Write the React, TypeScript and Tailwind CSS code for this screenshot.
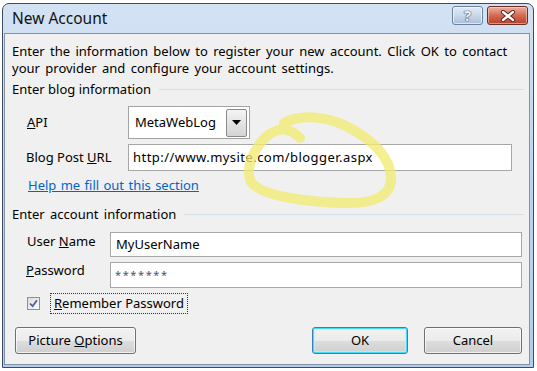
export default function App() {
  const font = "font-['Noto_Sans','Open_Sans',sans-serif]"

  return (
    <div className={`relative w-[537px] h-[371px] overflow-hidden bg-white pl-[2px] pt-[3px] text-[13px] text-black ${font}`}>
      {/* Window frame */}
      <div className="flex h-[365px] w-[532px] flex-col rounded-t-[7px] border border-[#3d4c5e] bg-gradient-to-b from-[#d3e2f3] via-[#bed4ec] to-[#b4cce8]">
        {/* Title bar */}
        <div className="flex h-[29px] items-start justify-between pl-[9px] pr-[5px]">
          <span className="mt-[4px] text-[15.5px] leading-[20px] text-[#111]">New Account</span>
          <div className="mt-[2px] flex gap-[4px]">
            <div className="flex h-[19px] w-[31px] items-center justify-center rounded-[3px] border border-[#6b819c] bg-gradient-to-b from-[#e3ecf6] via-[#c9d8ea] to-[#a9bfd9] shadow-[inset_0_0_0_1px_rgba(255,255,255,0.6)]">
              <span className="text-[15px] font-bold leading-none text-[#eef2f6] [text-shadow:0_0_1px_#3c5068,0_0_1px_#3c5068,0_0_1px_#3c5068]">?</span>
            </div>
            <div className="flex h-[19px] w-[41px] items-center justify-center rounded-[3px] border border-[#6e2e22] bg-gradient-to-b from-[#eab2a3] via-[#d36a52] to-[#b8402a] shadow-[inset_0_0_0_1px_rgba(255,230,220,0.5)]">
              <svg width="16" height="12" viewBox="0 0 16 12">
                <path d="M3 2 L13 10 M13 2 L3 10" stroke="#5a2016" strokeWidth="4.2" strokeLinecap="round" />
                <path d="M3 2 L13 10 M13 2 L3 10" stroke="#ffffff" strokeWidth="2.4" strokeLinecap="round" />
              </svg>
            </div>
          </div>
        </div>

        {/* Client area */}
        <div className="ml-[1px] mr-[3px] mb-[2px] flex-1 border border-[#8193ab] bg-[#f0f0f0] pl-[7px] pr-[5px]">
          <p className="mt-[9px] leading-[17px] [word-spacing:2px]">
            Enter the information below to register your new account. Click OK to contact
            <br />
            your provider and configure your account settings.
          </p>

          {/* Blog section */}
          <div className="mt-[4px] flex h-[17px] items-center gap-[8px]">
            <span className="leading-[17px]">Enter blog information</span>
            <div className="h-px flex-1 bg-[#d5dfe5]" />
          </div>

          <div className="mt-[8px] flex items-center pl-[15px]">
            <span className="w-[101px]"><u>A</u>PI</span>
            <div className="flex h-[33px] w-[122px] items-center justify-between border border-[#a3a3a3] bg-white pl-[6px] pr-[2px]">
              <span>MetaWebLog</span>
              <div className="flex h-[28px] w-[21px] items-center justify-center rounded-[2px] border border-[#8a8a8a] bg-gradient-to-b from-[#f4f4f4] to-[#d4d4d4]">
                <svg width="9" height="5" viewBox="0 0 9 5">
                  <path d="M0 0 H9 L4.5 5 Z" fill="#000" />
                </svg>
              </div>
            </div>
          </div>

          <div className="mt-[5px] flex items-center pl-[14px]">
            <span className="w-[102px]">Blog Post <u>U</u>RL</span>
            <div className="flex h-[27px] w-[384px] items-center border border-[#a7a7a7] bg-white pl-[4px] tracking-[0.45px]">
              http://www.mysite.com/blogger.aspx
            </div>
          </div>

          <div className="mt-[6px] pl-[16px] leading-[17px]">
            <a className="text-[#0066cc] underline [word-spacing:1px]">Help me fill out this section</a>
          </div>

          {/* Account section */}
          <div className="mt-[12px] flex h-[17px] items-center gap-[8px]">
            <span className="leading-[17px] [word-spacing:2px]">Enter account information</span>
            <div className="h-px flex-1 bg-[#d5dfe5]" />
          </div>

          <div className="mt-[9px] flex items-start pl-[15px]">
            <span className="w-[83px] pt-[1px] leading-[17px]">User <u>N</u>ame</span>
            <div className="flex h-[25px] w-[412px] items-center border border-[#a7a7a7] bg-white pl-[5px]">
              MyUserName
            </div>
          </div>

          <div className="mt-[5px] flex items-start pl-[14px]">
            <span className="w-[84px] leading-[17px]"><u>P</u>assword</span>
            <div className="flex h-[26px] w-[412px] items-center border border-[#a7a7a7] bg-white pl-[4px] text-[11px] tracking-[1.6px] text-[#4a5568]">
              *******
            </div>
          </div>

          <div className="mt-[5px] flex items-center pl-[15px]">
            <div className="flex h-[13px] w-[13px] items-center justify-center border border-[#8e8f8f] bg-gradient-to-br from-[#dcdcdc] to-[#fbfbfb]">
              <svg width="9" height="9" viewBox="0 0 9 9">
                <path d="M1 4.5 L3.6 7.2 L8 1.2" stroke="#4a5f97" strokeWidth="1.8" fill="none" />
              </svg>
            </div>
            <div className="ml-[10px] flex h-[21px] items-center border border-dotted border-[#333] px-[3px]">
              <span><u>R</u>emember Password</span>
            </div>
          </div>

          {/* Buttons */}
          <div className="mt-[13px] flex items-center">
            <button className="ml-[3px] h-[27px] w-[121px] rounded-[3px] border border-[#707070] bg-[linear-gradient(#f2f2f2_0%,#ebebeb_50%,#dddddd_51%,#cfcfcf_100%)] shadow-[inset_0_0_0_1px_rgba(255,255,255,0.7)]">
              Picture <u>O</u>ptions
            </button>
            <div className="flex-1" />
            <button className="h-[27px] w-[96px] rounded-[3px] border border-[#3c7fb1] bg-[linear-gradient(#f2f2f2_0%,#ebebeb_50%,#dddddd_51%,#cfcfcf_100%)] shadow-[inset_0_0_0_1px_#48d8fb,inset_0_0_0_2px_rgba(190,240,255,0.6)]">
              OK
            </button>
            <button className="ml-[16px] mr-[2px] h-[27px] w-[98px] rounded-[3px] border border-[#707070] bg-[linear-gradient(#f2f2f2_0%,#ebebeb_50%,#dddddd_51%,#cfcfcf_100%)] shadow-[inset_0_0_0_1px_rgba(255,255,255,0.7)]">
              Cancel
            </button>
          </div>
        </div>
      </div>

      {/* Hand-drawn highlighter annotation */}
      <svg className="pointer-events-none absolute left-0 top-0" width="537" height="371" viewBox="0 0 537 371">
        <path
          d="M300 138 C290 128 280 126 267 136 C252 150 245 170 251 182 C262 197 310 202 345 203 C373 204 390 196 391 180 C392 158 372 139 346 126 C325 116 300 114 284 123"
          stroke="#f1ea72"
          strokeOpacity="0.78"
          strokeWidth="10"
          strokeLinecap="round"
          strokeLinejoin="round"
          fill="none"
        />
      </svg>
    </div>
  )
}
